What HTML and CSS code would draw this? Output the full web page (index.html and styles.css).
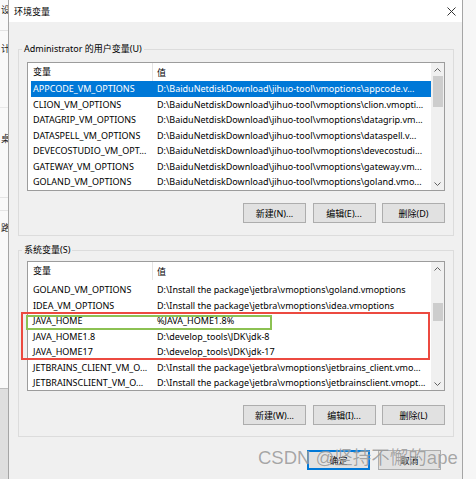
FILE: index.html
```html
<!DOCTYPE html>
<html lang="zh-CN">
<head>
<meta charset="utf-8">
<title>环境变量</title>
<link rel="stylesheet" href="styles.css">
</head>
<body>
<div class="screen">
  <div class="bgl">
    <div class="frag fa">设</div>
    <div class="frag fb">计</div>
    <div class="frag fc">桌</div>
    <div class="frag fd"></div>
    <div class="frag fe">路</div>
    <div class="frag ff"></div>
  </div>

  <div class="dialog">
    <div class="titlebar">
      <span class="title">环境变量</span>
      <svg class="close" width="9" height="9" viewBox="0 0 9 9"><path d="M0.5 0.5 L8.5 8.5 M8.5 0.5 L0.5 8.5" stroke="#333" stroke-width="1" fill="none"/></svg>
    </div>

    <div class="dlg-body">
      <fieldset class="group g1">
        <legend>Administrator 的用户变量(U)</legend>
        <div class="list l1">
          <div class="list-main">
            <div class="row header"><span class="c1">变量</span><span class="c2">值</span></div>
            <div class="row sel"><span class="c1">APPCODE_VM_OPTIONS</span><span class="c2">D:\BaiduNetdiskDownload\jihuo-tool\vmoptions\appcode.v...</span></div>
            <div class="row"><span class="c1">CLION_VM_OPTIONS</span><span class="c2">D:\BaiduNetdiskDownload\jihuo-tool\vmoptions\clion.vmopti...</span></div>
            <div class="row"><span class="c1">DATAGRIP_VM_OPTIONS</span><span class="c2">D:\BaiduNetdiskDownload\jihuo-tool\vmoptions\datagrip.vm...</span></div>
            <div class="row"><span class="c1">DATASPELL_VM_OPTIONS</span><span class="c2">D:\BaiduNetdiskDownload\jihuo-tool\vmoptions\dataspell.v...</span></div>
            <div class="row"><span class="c1">DEVECOSTUDIO_VM_OPT...</span><span class="c2">D:\BaiduNetdiskDownload\jihuo-tool\vmoptions\devecostudi...</span></div>
            <div class="row"><span class="c1">GATEWAY_VM_OPTIONS</span><span class="c2">D:\BaiduNetdiskDownload\jihuo-tool\vmoptions\gateway.vm...</span></div>
            <div class="row"><span class="c1">GOLAND_VM_OPTIONS</span><span class="c2">D:\BaiduNetdiskDownload\jihuo-tool\vmoptions\goland.vmo...</span></div>
          </div>
          <div class="scroll">
            <div class="arrow"><svg width="7" height="4" viewBox="0 0 7 4"><polyline points="0.5,3.5 3.5,0.5 6.5,3.5" fill="none" stroke="#606060" stroke-width="1"/></svg></div>
            <div class="thumb t1"></div>
            <div class="track"></div>
            <div class="arrow"><svg width="7" height="4" viewBox="0 0 7 4"><polyline points="0.5,0.5 3.5,3.5 6.5,0.5" fill="none" stroke="#606060" stroke-width="1"/></svg></div>
          </div>
        </div>
        <div class="btns b1">
          <div class="btn">新建(N)...</div>
          <div class="btn">编辑(E)...</div>
          <div class="btn">删除(D)</div>
        </div>
      </fieldset>

      <fieldset class="group g2">
        <legend>系统变量(S)</legend>
        <div class="list l2">
          <div class="list-main">
            <div class="row header"><span class="c1">变量</span><span class="c2">值</span></div>
            <div class="rows2">
              <div class="row"><span class="c1">GOLAND_VM_OPTIONS</span><span class="c2">D:\Install the package\jetbra\vmoptions\goland.vmoptions</span></div>
              <div class="row"><span class="c1">IDEA_VM_OPTIONS</span><span class="c2">D:\Install the package\jetbra\vmoptions\idea.vmoptions</span></div>
              <div class="row"><span class="c1">JAVA_HOME</span><span class="c2">%JAVA_HOME1.8%</span></div>
              <div class="row"><span class="c1">JAVA_HOME1.8</span><span class="c2">D:\develop_tools\JDK\jdk-8</span></div>
              <div class="row"><span class="c1">JAVA_HOME17</span><span class="c2">D:\develop_tools\JDK\jdk-17</span></div>
              <div class="row"><span class="c1">JETBRAINS_CLIENT_VM_O...</span><span class="c2">D:\Install the package\jetbra\vmoptions\jetbrains_client.vmo...</span></div>
              <div class="row"><span class="c1">JETBRAINSCLIENT_VM_O...</span><span class="c2">D:\Install the package\jetbra\vmoptions\jetbrainsclient.vmopt...</span></div>
            </div>
          </div>
          <div class="scroll">
            <div class="arrow"><svg width="7" height="4" viewBox="0 0 7 4"><polyline points="0.5,3.5 3.5,0.5 6.5,3.5" fill="none" stroke="#606060" stroke-width="1"/></svg></div>
            <div class="gap2"></div>
            <div class="thumb t2"></div>
            <div class="track"></div>
            <div class="arrow"><svg width="7" height="4" viewBox="0 0 7 4"><polyline points="0.5,0.5 3.5,3.5 6.5,0.5" fill="none" stroke="#606060" stroke-width="1"/></svg></div>
          </div>
        </div>
        <div class="btns b2">
          <div class="btn">新建(W)...</div>
          <div class="btn">编辑(I)...</div>
          <div class="btn">删除(L)</div>
        </div>
      </fieldset>

      <div class="footer">
        <div class="btn primary">确定</div>
        <div class="btn">取消</div>
      </div>
    </div>
  </div>

  <div class="bgr"></div>

  <div class="mark-red"></div>
  <div class="mark-green"></div>
  <div class="watermark">CSDN @坚持不懈的ape</div>
</div>
</body>
</html>
```

FILE: styles.css
```css
* { box-sizing: border-box; }
html, body { margin: 0; padding: 0; }
body {
  width: 476px;
  height: 479px;
  overflow: hidden;
  font-family: "Noto Sans", "Noto Sans CJK SC", sans-serif;
  font-size: 9px;
  color: #000;
  background: #f3f3f3;
}
.screen {
  position: relative;
  display: flex;
  height: 479px;
}

/* background window strip on the left */
.bgl {
  width: 8px;
  flex: none;
  background: #f9f9f9;
  overflow: hidden;
  display: flex;
  flex-direction: column;
  color: #222;
}
.frag {
  white-space: nowrap;
  text-align: right;
  line-height: 14px;
  direction: rtl;
  margin-right: -2px;
}
.fa { height: 31px; line-height: 20px; border-bottom: 1px solid #e2e2e2; }
.fb { height: 77px; padding-top: 11px; border-bottom: 1px solid #e8e8e8; }
.fc { height: 90px; padding-top: 24px; border-bottom: 1px solid #e4e4e4; }
.fd { height: 13px; border-bottom: 1px solid #e4e4e4; }
.fe { height: 177px; padding-top: 10px; }
.ff { flex: 1; background: #dedede; border-top: 1px solid #bcbcbc; }

/* dialog */
.dialog {
  width: 455px;
  flex: none;
  border-left: 1px solid #a5a5a5;
  border-right: 1px solid #a5a5a5;
  background: #f0f0f0;
  display: flex;
  flex-direction: column;
}
.titlebar {
  height: 22px;
  background: #fff;
  display: flex;
  align-items: center;
  justify-content: space-between;
  padding: 0 6px 0 5px;
  flex: none;
}
.title { font-size: 9px; color: #000; }
.close { display: block; }

.dlg-body {
  padding: 0 8px 0 9px;
}

.group {
  margin: 0;
  padding: 0 8px 12px;
  border: 1px solid #dcdcdc;
  min-width: 0;
}
.g1 { margin-top: 19px; }
.g2 { margin-top: 6px; padding-bottom: 11px; }
.group legend {
  padding: 0 2px;
  margin-left: -5px;
  line-height: 16px;
  font-size: 9px;
}

.list {
  display: flex;
  background: #fff;
  border: 1px solid #9c9c9c;
}
.l1 { margin-top: 5px; height: 129px; }
.l2 { margin-top: 3px; height: 130px; }
.list-main {
  flex: 1;
  min-width: 0;
  padding-left: 3px;
  overflow: hidden;
}
.row {
  display: flex;
  align-items: center;
  height: 15.5px;
  white-space: nowrap;
  line-height: 15px;
}
.row.header { height: 18px; }
.rows2 { padding-top: 2px; }
.c1 {
  width: 122px;
  flex: none;
  padding-left: 2px;
  overflow: hidden;
}
.c2 {
  flex: 1;
  min-width: 0;
  padding-left: 4px;
  overflow: hidden;
}
.header .c1 {
  height: 18px;
  line-height: 18px;
  border-right: 1px solid #e5e5e5;
}
.row.sel { background: #0078d7; color: #fff; }

.scroll {
  width: 13px;
  flex: none;
  background: #f0f0f0;
  display: flex;
  flex-direction: column;
  align-items: center;
}
.arrow {
  height: 13px;
  width: 13px;
  display: flex;
  align-items: center;
  justify-content: center;
  flex: none;
}
.arrow svg { display: block; }
.thumb {
  width: 10px;
  background: #cdcdcd;
  flex: none;
}
.t1 { height: 31px; }
.gap2 { height: 28px; flex: none; }
.t2 { height: 18px; }
.track { flex: 1; }

.btns {
  display: flex;
  justify-content: flex-end;
  gap: 6.5px;
}
.b1 { margin-top: 12px; }
.b2 { margin-top: 14px; }
.btn {
  width: 63px;
  height: 20px;
  border: 1px solid #adadad;
  background: #e1e1e1;
  display: flex;
  align-items: center;
  justify-content: center;
  font-size: 9px;
  white-space: nowrap;
}
.footer {
  display: flex;
  justify-content: flex-end;
  gap: 8px;
  margin-top: 13px;
  padding-right: 13px;
}
.btn.primary {
  border: 1px solid #0078d7;
  box-shadow: inset 0 0 0 1px #0078d7;
}

/* right strip (desktop behind) */
.bgr {
  flex: 1;
  background: #f6f6f6;
}

/* annotations over the screenshot */
.mark-red {
  position: absolute;
  left: 21px;
  top: 312px;
  width: 409px;
  height: 48px;
  border: 2px solid #ec4a40;
}
.mark-green {
  position: absolute;
  left: 26px;
  top: 315px;
  width: 246px;
  height: 15px;
  border: 2px solid #8cc152;
}
.watermark {
  position: absolute;
  left: 258px;
  top: 446px;
  font-family: "Liberation Sans", "Noto Sans CJK SC", sans-serif;
  font-size: 18.5px;
  line-height: 24px;
  white-space: nowrap;
  color: rgba(110, 110, 110, 0.6);
  text-shadow: 0 0 1px rgba(255, 255, 255, 0.7);
}
```
